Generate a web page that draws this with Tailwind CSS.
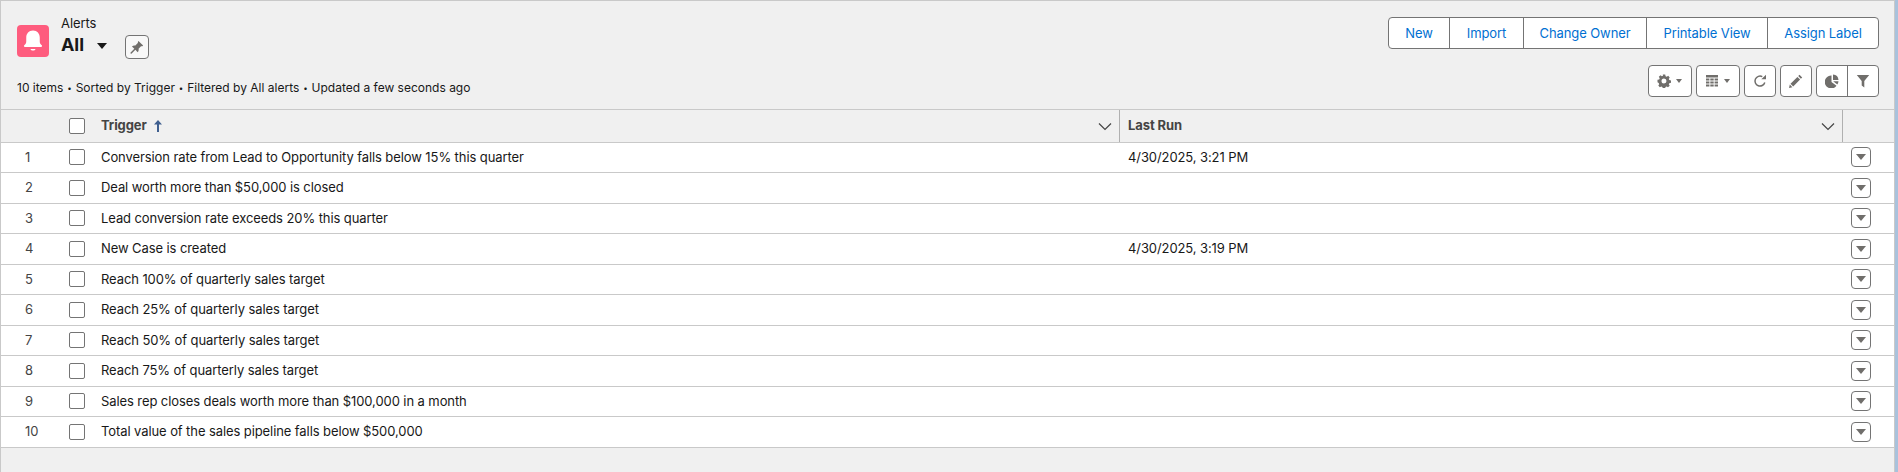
<!DOCTYPE html>
<html>
    <head>
        <meta charset="UTF-8">
        <meta name="viewport" content="width=device-width, initial-scale=1.0">
        <script src="https://cdn.jsdelivr.net/npm/@tailwindcss/browser@4"></script>
        <title>Alerts</title>
    </head>
    <body class="h-[472px] overflow-hidden bg-[#a9c2dc] font-['Inter',sans-serif] text-[13px] tracking-[-0.09px] text-[#181818]">
        <div class="h-[472px] w-[1895px] bg-[#f0f0f0] border-l border-t border-r border-[#c9c9c9] flex flex-col">
            <!-- header -->
            <div class="h-[108px] pl-4 pr-[15px] flex justify-between">
                <div class="flex flex-col">
                    <div class="flex mt-[14px]">
                        <div class="w-8 h-8 mt-[10px] rounded bg-[#fe5c7e] flex items-center justify-center">
                            <svg class="w-[30px] h-[30px]" viewBox="0 0 24 24" fill="#fff"><path d="M12 3.500c-3.400 0-5.400 2.600-5.400 5.600v3.200c0 1.400-.7 2.200-1.600 3.100-.5.5-.2 1.300.5 1.300h13c.7 0 1-.8.500-1.300-.9-.9-1.600-1.700-1.600-3.100V9.100c0-3-2-5.600-5.400-5.600z"/><path d="M10 18.300h4c-.2.8-1 1.300-2 1.300s-1.800-.5-2-1.300z"/></svg>
                        </div>
                        <div class="ml-3">
                            <div class="leading-[17px]">Alerts</div>
                            <div class="flex items-start">
                                <span class="text-[18px] leading-[26px] font-bold">All</span>
                                <svg class="w-3 h-2 ml-[12px] mt-[10px]" viewBox="0 0 12 8" fill="#181818"><path d="M1 1h10L6 7z"/></svg>
                                <div class="w-6 h-6 ml-[17px] mt-[3px] rounded border border-[#747474] bg-white/50 flex items-center justify-center">
                                    <svg class="w-3.5 h-3.5" viewBox="0 0 24 24" fill="#706e6b"><path d="M14.500 1.500l8 8-2 1.500-1.200-.6-4.600 4.600c.6 2.200 0 4.300-1.500 5.800l-4-4-6.700 6.700-1.600-.2-.2-1.600 6.700-6.700-4-4c1.500-1.500 3.600-2.100 5.800-1.500l4.600-4.600-.6-1.200z"/></svg>
                                </div>
                            </div>
                        </div>
                    </div>
                    <div class="mt-5 text-[12px] leading-[18px] tracking-normal">10 items <span class="mx-[0.5px] text-[8px] align-[1px]">•</span> Sorted by Trigger <span class="mx-[0.5px] text-[8px] align-[1px]">•</span> Filtered by All alerts <span class="mx-[0.5px] text-[8px] align-[1px]">•</span> Updated a few seconds ago</div>
                </div>
                <div class="flex flex-col items-end">
                    <div class="mt-4 h-8 flex rounded border border-[#747474] bg-white text-[#0070d2]">
                        <div class="w-[60px] pt-0.5 flex items-center justify-center">New</div>
                        <div class="w-[74px] pt-0.5 flex items-center justify-center border-l border-[#747474]">Import</div>
                        <div class="w-[123px] pt-0.5 flex items-center justify-center border-l border-[#747474]">Change Owner</div>
                        <div class="w-[121px] pt-0.5 flex items-center justify-center border-l border-[#747474]">Printable View</div>
                        <div class="w-[111px] pt-0.5 flex items-center justify-center border-l border-[#747474]">Assign Label</div>
                    </div>
                    <div class="mt-4 flex gap-1">
                        <div class="w-11 h-8 rounded border border-[#747474] bg-white flex items-center justify-center gap-1">
                            <svg class="w-3.5 h-3.5" viewBox="0 0 14 14" fill="#706e6b" fill-rule="evenodd"><path d="M5.800.5h2.400l.4 1.700 1.100.5 1.500-.9 1.500 1.700-.9 1.400.5 1.100 1.700.4v2.400l-1.700.4-.5 1.100.9 1.500-1.700 1.500-1.400-.9-1.100.5-.4 1.700H5.800l-.4-1.700-1.100-.5-1.500.9-1.500-1.700.9-1.400-.5-1.100L.5 8.200V5.800l1.700-.4.5-1.100-.9-1.500 1.700-1.500 1.400.9 1.100-.5zM7 4.500a2.500 2.500 0 1 0 0 5 2.500 2.500 0 0 0 0-5z"/></svg>
                            <svg class="w-2 h-1" viewBox="0 0 8 4" fill="#706e6b"><path d="M1 0h6L4 4z"/></svg>
                        </div>
                        <div class="w-11 h-8 rounded border border-[#747474] bg-white flex items-center justify-center gap-1">
                            <svg class="w-3.5 h-3.5" viewBox="0 0 14 14" fill="#706e6b"><path d="M1 1h12v2.400H1zM1 4.500h3.400v2H1zM5.300 4.500h3.400v2H5.300zM9.600 4.500H13v2H9.600zM1 7.500h3.400v2H1zM5.300 7.500h3.400v2H5.300zM9.600 7.500H13v2H9.600zM1 10.500h3.400v2H1zM5.300 10.500h3.400v2H5.300zM9.600 10.500H13v2H9.600z"/></svg>
                            <svg class="w-2 h-1" viewBox="0 0 8 4" fill="#706e6b"><path d="M1 0h6L4 4z"/></svg>
                        </div>
                        <div class="w-8 h-8 rounded border border-[#747474] bg-white flex items-center justify-center">
                            <svg class="w-3.5 h-3.5" viewBox="0 0 14 14" fill="none" stroke="#706e6b" stroke-width="1.500"><path d="M11.800 8.500A5 5 0 1 1 9.300 2.600"/><path d="M8.300 5.300L13 5.300V.8z" fill="#706e6b" stroke="none"/></svg>
                        </div>
                        <div class="w-8 h-8 rounded border border-[#747474] bg-white flex items-center justify-center">
                            <svg class="w-3.5 h-3.5" viewBox="0 0 14 14" fill="#706e6b"><path d="M10.500.8l2.700 2.700-1.300 1.300-2.700-2.700zM8.400 2.900l2.700 2.700-6.900 6.900-2.700-2.700zM.8 10.600l2.600 2.600-3.400.8z"/></svg>
                        </div>
                        <div class="h-8 flex rounded border border-[#747474] bg-white">
                            <div class="w-[30px] flex items-center justify-center">
                                <svg class="w-3.5 h-3.5" viewBox="0 0 14 14" fill="#706e6b"><path d="M6.500 1.500V8l5 3.800A6.500 6.500 0 1 1 6.500 1.500z"/><path d="M8 .5a6 6 0 0 1 5.500 5.500H8z"/><path d="M8.200 7.200h5.300a6 6 0 0 1-1.200 3.200z"/></svg>
                            </div>
                            <div class="w-[31px] flex items-center justify-center border-l border-[#747474]">
                                <svg class="w-3.5 h-3.5" viewBox="0 0 14 14" fill="#706e6b"><path d="M.8 1h12.400L8.300 7v6.500L5.700 11.500V7z"/></svg>
                            </div>
                        </div>
                    </div>
                </div>
            </div>

            <!-- table head -->
            <div class="h-[33.6px] flex items-center border-t border-b border-[#c9c9c9] font-bold text-[#444444]">
                <div class="w-[68px] shrink-0"></div>
                <div class="w-[32px] shrink-0"><div class="w-4 h-4 rounded-[2px] border border-[#747474] bg-white"></div></div>
                <div class="w-[1019px] h-full shrink-0 flex items-center justify-between border-r border-[#b0b0b0] pr-[7px]">
                    <div class="flex items-center gap-1.5">Trigger
                        <svg class="w-2.5 h-3" viewBox="0 0 10 12" fill="#3f5f8f"><path d="M5 0l4 4.500H6V12H4V4.500H1z"/></svg>
                    </div>
                    <svg class="w-3.5 h-3.5" viewBox="0 0 14 14" fill="none" stroke="#444" stroke-width="1.200"><path d="M1 4.500l6 6 6-6"/></svg>
                </div>
                <div class="w-[723px] h-full shrink-0 flex items-center justify-between border-r border-[#b0b0b0] pl-2 pr-[7px]">
                    <span>Last Run</span>
                    <svg class="w-3.5 h-3.5" viewBox="0 0 14 14" fill="none" stroke="#444" stroke-width="1.200"><path d="M1 4.500l6 6 6-6"/></svg>
                </div>
            </div>

            <!-- rows -->
            <div class="bg-white">
                <div class="h-[30.5px] flex items-center border-b border-[#c9c9c9]">
                    <div class="w-[68px] shrink-0 pl-6 text-[#444444]">1</div>
                    <div class="w-[32px] shrink-0"><div class="w-4 h-4 rounded-[2px] border border-[#747474] bg-white"></div></div>
                    <div class="w-[1027px] shrink-0">Conversion rate from Lead to Opportunity falls below 15% this quarter</div>
                    <div class="w-[723px] shrink-0">4/30/2025, 3:21 PM</div>
                    <div class="w-5 h-5 shrink-0 rounded border border-[#747474] flex items-center justify-center"><svg class="w-2.5 h-1.5" viewBox="0 0 10 6" fill="#706e6b"><path d="M0 0h10L5 6z"/></svg></div>
                </div>
                <div class="h-[30.5px] flex items-center border-b border-[#c9c9c9]">
                    <div class="w-[68px] shrink-0 pl-6 text-[#444444]">2</div>
                    <div class="w-[32px] shrink-0"><div class="w-4 h-4 rounded-[2px] border border-[#747474] bg-white"></div></div>
                    <div class="w-[1027px] shrink-0">Deal worth more than $50,000 is closed</div>
                    <div class="w-[723px] shrink-0"></div>
                    <div class="w-5 h-5 shrink-0 rounded border border-[#747474] flex items-center justify-center"><svg class="w-2.5 h-1.5" viewBox="0 0 10 6" fill="#706e6b"><path d="M0 0h10L5 6z"/></svg></div>
                </div>
                <div class="h-[30.5px] flex items-center border-b border-[#c9c9c9]">
                    <div class="w-[68px] shrink-0 pl-6 text-[#444444]">3</div>
                    <div class="w-[32px] shrink-0"><div class="w-4 h-4 rounded-[2px] border border-[#747474] bg-white"></div></div>
                    <div class="w-[1027px] shrink-0">Lead conversion rate exceeds 20% this quarter</div>
                    <div class="w-[723px] shrink-0"></div>
                    <div class="w-5 h-5 shrink-0 rounded border border-[#747474] flex items-center justify-center"><svg class="w-2.5 h-1.5" viewBox="0 0 10 6" fill="#706e6b"><path d="M0 0h10L5 6z"/></svg></div>
                </div>
                <div class="h-[30.5px] flex items-center border-b border-[#c9c9c9]">
                    <div class="w-[68px] shrink-0 pl-6 text-[#444444]">4</div>
                    <div class="w-[32px] shrink-0"><div class="w-4 h-4 rounded-[2px] border border-[#747474] bg-white"></div></div>
                    <div class="w-[1027px] shrink-0">New Case is created</div>
                    <div class="w-[723px] shrink-0">4/30/2025, 3:19 PM</div>
                    <div class="w-5 h-5 shrink-0 rounded border border-[#747474] flex items-center justify-center"><svg class="w-2.5 h-1.5" viewBox="0 0 10 6" fill="#706e6b"><path d="M0 0h10L5 6z"/></svg></div>
                </div>
                <div class="h-[30.5px] flex items-center border-b border-[#c9c9c9]">
                    <div class="w-[68px] shrink-0 pl-6 text-[#444444]">5</div>
                    <div class="w-[32px] shrink-0"><div class="w-4 h-4 rounded-[2px] border border-[#747474] bg-white"></div></div>
                    <div class="w-[1027px] shrink-0">Reach 100% of quarterly sales target</div>
                    <div class="w-[723px] shrink-0"></div>
                    <div class="w-5 h-5 shrink-0 rounded border border-[#747474] flex items-center justify-center"><svg class="w-2.5 h-1.5" viewBox="0 0 10 6" fill="#706e6b"><path d="M0 0h10L5 6z"/></svg></div>
                </div>
                <div class="h-[30.5px] flex items-center border-b border-[#c9c9c9]">
                    <div class="w-[68px] shrink-0 pl-6 text-[#444444]">6</div>
                    <div class="w-[32px] shrink-0"><div class="w-4 h-4 rounded-[2px] border border-[#747474] bg-white"></div></div>
                    <div class="w-[1027px] shrink-0">Reach 25% of quarterly sales target</div>
                    <div class="w-[723px] shrink-0"></div>
                    <div class="w-5 h-5 shrink-0 rounded border border-[#747474] flex items-center justify-center"><svg class="w-2.5 h-1.5" viewBox="0 0 10 6" fill="#706e6b"><path d="M0 0h10L5 6z"/></svg></div>
                </div>
                <div class="h-[30.5px] flex items-center border-b border-[#c9c9c9]">
                    <div class="w-[68px] shrink-0 pl-6 text-[#444444]">7</div>
                    <div class="w-[32px] shrink-0"><div class="w-4 h-4 rounded-[2px] border border-[#747474] bg-white"></div></div>
                    <div class="w-[1027px] shrink-0">Reach 50% of quarterly sales target</div>
                    <div class="w-[723px] shrink-0"></div>
                    <div class="w-5 h-5 shrink-0 rounded border border-[#747474] flex items-center justify-center"><svg class="w-2.5 h-1.5" viewBox="0 0 10 6" fill="#706e6b"><path d="M0 0h10L5 6z"/></svg></div>
                </div>
                <div class="h-[30.5px] flex items-center border-b border-[#c9c9c9]">
                    <div class="w-[68px] shrink-0 pl-6 text-[#444444]">8</div>
                    <div class="w-[32px] shrink-0"><div class="w-4 h-4 rounded-[2px] border border-[#747474] bg-white"></div></div>
                    <div class="w-[1027px] shrink-0">Reach 75% of quarterly sales target</div>
                    <div class="w-[723px] shrink-0"></div>
                    <div class="w-5 h-5 shrink-0 rounded border border-[#747474] flex items-center justify-center"><svg class="w-2.5 h-1.5" viewBox="0 0 10 6" fill="#706e6b"><path d="M0 0h10L5 6z"/></svg></div>
                </div>
                <div class="h-[30.5px] flex items-center border-b border-[#c9c9c9]">
                    <div class="w-[68px] shrink-0 pl-6 text-[#444444]">9</div>
                    <div class="w-[32px] shrink-0"><div class="w-4 h-4 rounded-[2px] border border-[#747474] bg-white"></div></div>
                    <div class="w-[1027px] shrink-0">Sales rep closes deals worth more than $100,000 in a month</div>
                    <div class="w-[723px] shrink-0"></div>
                    <div class="w-5 h-5 shrink-0 rounded border border-[#747474] flex items-center justify-center"><svg class="w-2.5 h-1.5" viewBox="0 0 10 6" fill="#706e6b"><path d="M0 0h10L5 6z"/></svg></div>
                </div>
                <div class="h-[30.5px] flex items-center border-b border-[#c9c9c9]">
                    <div class="w-[68px] shrink-0 pl-6 text-[#444444]">10</div>
                    <div class="w-[32px] shrink-0"><div class="w-4 h-4 rounded-[2px] border border-[#747474] bg-white"></div></div>
                    <div class="w-[1027px] shrink-0">Total value of the sales pipeline falls below $500,000</div>
                    <div class="w-[723px] shrink-0"></div>
                    <div class="w-5 h-5 shrink-0 rounded border border-[#747474] flex items-center justify-center"><svg class="w-2.5 h-1.5" viewBox="0 0 10 6" fill="#706e6b"><path d="M0 0h10L5 6z"/></svg></div>
                </div>
            </div>
        </div>
    </body>
</html>
